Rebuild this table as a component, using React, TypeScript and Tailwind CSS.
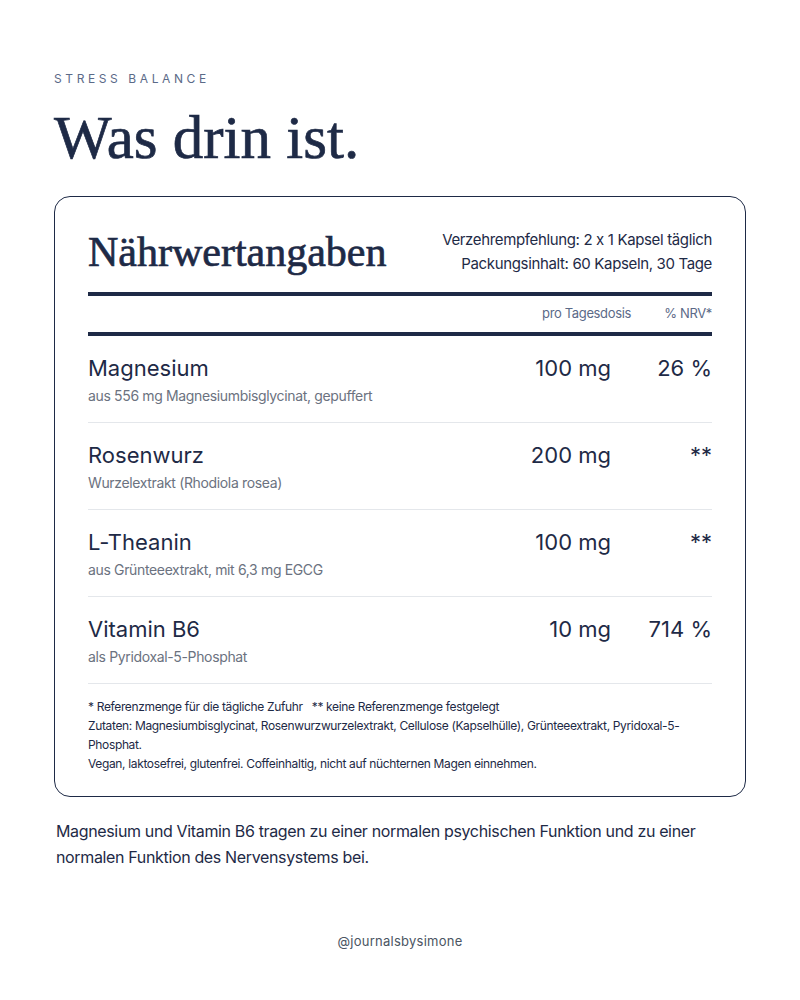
const navy = "text-[#1e2a46]";

interface Nutrient {
  name: string;
  note: string;
  amount: string;
  nrv: string;
}

const rows: Nutrient[] = [
  { name: "Magnesium", note: "aus 556 mg Magnesiumbisglycinat, gepuffert", amount: "100 mg", nrv: "26 %" },
  { name: "Rosenwurz", note: "Wurzelextrakt (Rhodiola rosea)", amount: "200 mg", nrv: "**" },
  { name: "L-Theanin", note: "aus Grünteeextrakt, mit 6,3 mg EGCG", amount: "100 mg", nrv: "**" },
  { name: "Vitamin B6", note: "als Pyridoxal-5-Phosphat", amount: "10 mg", nrv: "714 %" },
];

const sans = "font-['Inter','Noto_Sans',sans-serif] [font-variant-ligatures:no-contextual] tracking-[-0.022em]";
const serif = "font-['Liberation_Serif','DejaVu_Serif',serif] tracking-normal [-webkit-text-stroke:0.7px_#1e2a46]";

function Row({ item }: { item: Nutrient }) {
  return (
    <div className="border-b border-[#e4e7eb] pt-[18px] pb-[16px]">
      <div className={`flex items-center text-[22px] leading-[28px] tracking-normal ${navy}`}>
        <div className="flex-1">{item.name}</div>
        <div className="text-right">{item.amount}</div>
        <div className="w-[101px] text-right">{item.nrv}</div>
      </div>
      <div className="mt-[4px] text-[14px] leading-[20px] text-[#6b7280]">{item.note}</div>
    </div>
  );
}

export default function App() {
  return (
    <div className={`min-h-[1000px] bg-white px-[54px] pt-[71px] ${sans}`}>
      <div className="text-[12px] leading-[16px] tracking-[0.3em] text-[#5b6a88]">STRESS BALANCE</div>
      <h1 className={`mt-[21px] text-[61px] leading-[60px] ${serif} ${navy}`}>Was drin ist.</h1>

      <div className="mt-[28px] rounded-[16px] border-[1.5px] border-[#1e2a46] px-[33px] pb-[23px]">
        <div className="flex items-center justify-between pt-[31px] pb-[16px]">
          <h2 className={`text-[42px] leading-[48px] ${serif} [-webkit-text-stroke:0.4px_#1e2a46] ${navy}`}>
            Nährwertangaben
          </h2>
          <div className={`text-right text-[15px] leading-[24px] ${navy}`}>
            <div>Verzehrempfehlung: 2 x 1 Kapsel täglich</div>
            <div>Packungsinhalt: 60 Kapseln, 30 Tage</div>
          </div>
        </div>
        <div className="h-[4px] bg-[#1e2a46]" />
        <div className="flex h-[36px] items-center justify-end text-[13px] text-[#5b6a88]">
          <div>pro Tagesdosis</div>
          <div className="w-[81px] text-right">% NRV*</div>
        </div>
        <div className="h-[4px] bg-[#1e2a46]" />

        {rows.map((r) => (
          <Row key={r.name} item={r} />
        ))}

        <div className={`pt-[13px] text-[12px] leading-[19px] ${navy}`}>
          <div>* Referenzmenge für die tägliche Zufuhr &nbsp;&nbsp;** keine Referenzmenge festgelegt</div>
          <div>Zutaten: Magnesiumbisglycinat, Rosenwurzwurzelextrakt, Cellulose (Kapselhülle), Grünteeextrakt, Pyridoxal-5-Phosphat.</div>
          <div>Vegan, laktosefrei, glutenfrei. Coffeinhaltig, nicht auf nüchternen Magen einnehmen.</div>
        </div>
      </div>

      <p className={`mt-[21px] pl-[2px] text-[16px] leading-[26px] ${navy}`}>
        Magnesium und Vitamin B6 tragen zu einer normalen psychischen Funktion und zu einer normalen Funktion des
        Nervensystems bei.
      </p>

      <div className="mt-[61px] text-center text-[13px] leading-[20px] tracking-[0.02em] text-[#4b5563]">
        @journalsbysimone
      </div>
    </div>
  );
}
